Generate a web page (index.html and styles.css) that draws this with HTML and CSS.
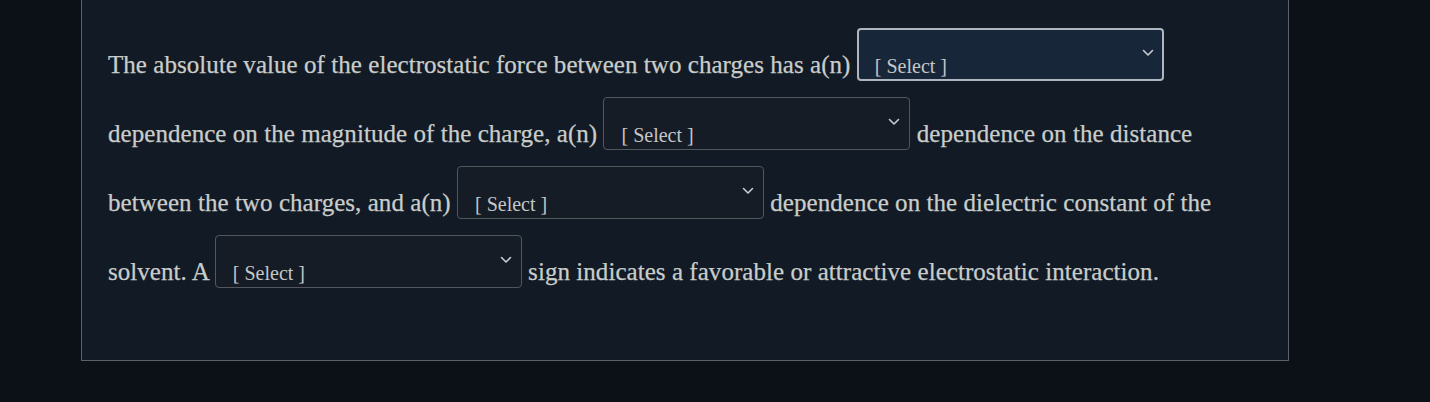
FILE: index.html
```html
<!DOCTYPE html>
<html lang="en">
<head>
<meta charset="utf-8">
<title>Question</title>
<link rel="stylesheet" href="styles.css">
</head>
<body>
<div class="panel">
  <p class="question">The absolute value of the electrostatic force between two charges has a(n) <span class="select focused"><span class="select-label">[ Select ]</span><svg class="chev" width="12" height="8" viewBox="0 0 12 8"><path d="M1.5 1.5 L6 6 L10.5 1.5" fill="none" stroke="#c8ccd0" stroke-width="1.6" stroke-linecap="round" stroke-linejoin="round"/></svg></span> dependence on the magnitude of the charge, a(n) <span class="select"><span class="select-label">[ Select ]</span><svg class="chev" width="12" height="8" viewBox="0 0 12 8"><path d="M1.5 1.5 L6 6 L10.5 1.5" fill="none" stroke="#c8ccd0" stroke-width="1.6" stroke-linecap="round" stroke-linejoin="round"/></svg></span> dependence on the distance between the two charges, and a(n) <span class="select"><span class="select-label">[ Select ]</span><svg class="chev" width="12" height="8" viewBox="0 0 12 8"><path d="M1.5 1.5 L6 6 L10.5 1.5" fill="none" stroke="#c8ccd0" stroke-width="1.6" stroke-linecap="round" stroke-linejoin="round"/></svg></span> dependence on the dielectric constant of the solvent. A <span class="select"><span class="select-label">[ Select ]</span><svg class="chev" width="12" height="8" viewBox="0 0 12 8"><path d="M1.5 1.5 L6 6 L10.5 1.5" fill="none" stroke="#c8ccd0" stroke-width="1.6" stroke-linecap="round" stroke-linejoin="round"/></svg></span> sign indicates a favorable or attractive electrostatic interaction.</p>
</div>
</body>
</html>
```

FILE: styles.css
```css
html, body {
  margin: 0;
  padding: 0;
}
body {
  background: #0c1118;
  height: 402px;
  overflow: hidden;
  font-family: "Liberation Serif", "DejaVu Serif", serif;
}
.panel {
  margin-left: 81px;
  width: 1208px;
  height: 361px;
  box-sizing: border-box;
  border: 1px solid #5c6168;
  border-top: none;
  background: #121a25;
  padding: 28px 40px 0 26px;
}
.question {
  margin: 0;
  font-size: 25px;
  line-height: 64px;
  letter-spacing: 0.05px;
  color: #c9cdca;
  -webkit-text-stroke: 0.25px #c9cdca;
}
.select {
  display: inline-flex;
  align-items: flex-start;
  justify-content: space-between;
  width: 307px;
  height: 53px;
  box-sizing: border-box;
  border: 1px solid #52575d;
  border-radius: 4px;
  background: #151c26;
  padding: 0 9px 0 17px;
  vertical-align: baseline;
  letter-spacing: 0;
  -webkit-text-stroke: 0;
}
.select.focused {
  border: 2px solid #aeb6bf;
  background: #18263a;
  padding: 0 8px 0 16px;
}
.select-label {
  display: block;
  padding-top: 26px;
  font-size: 20px;
  line-height: 22px;
  color: #c3c7c6;
}
.focused .select-label {
  padding-top: 25px;
}
.chev {
  display: block;
  margin-top: 20px;
}
.focused .chev {
  margin-top: 19px;
}
```
